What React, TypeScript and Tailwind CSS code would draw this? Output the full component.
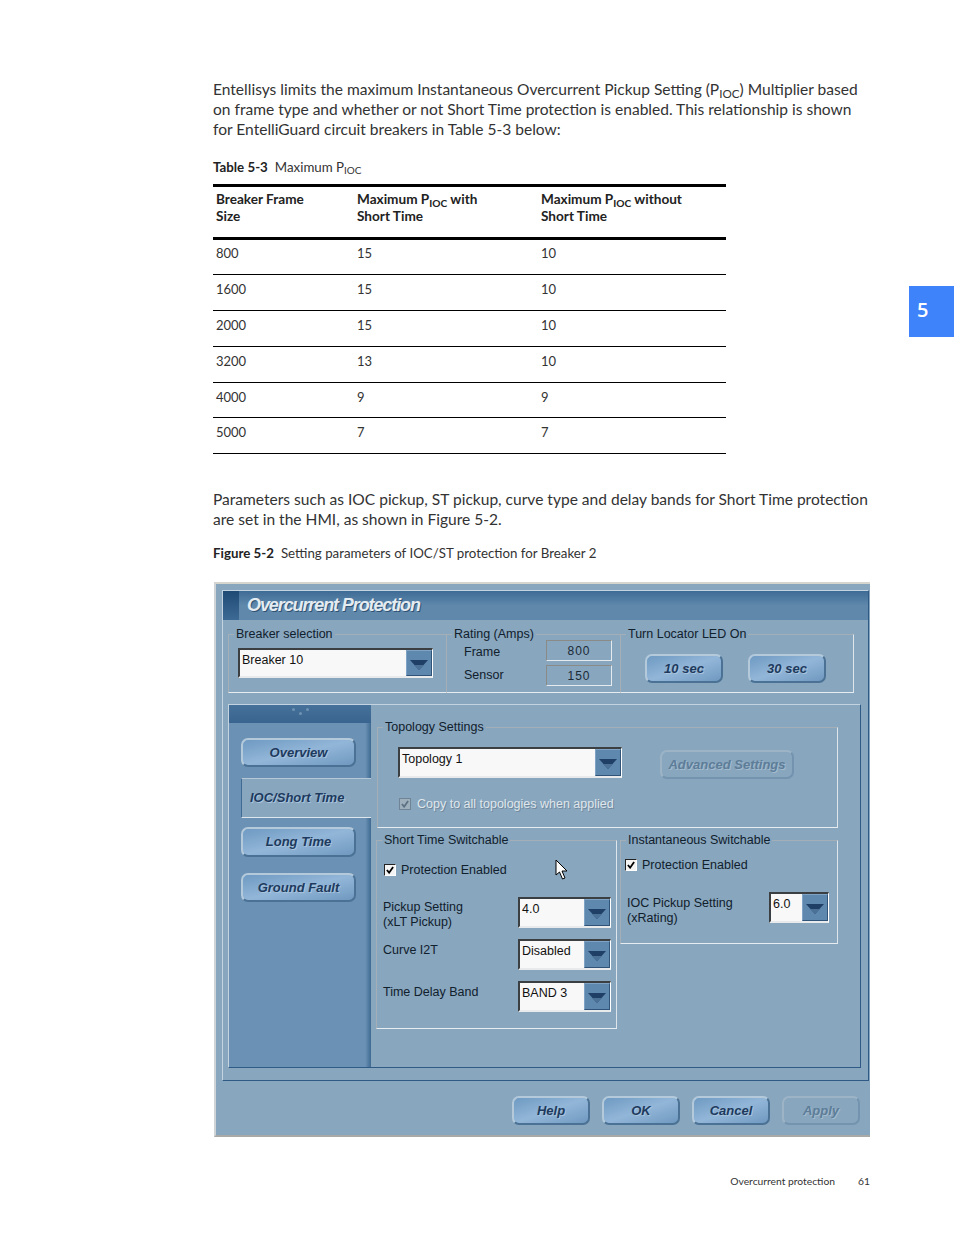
import type { ReactNode } from "react";

const rows = [
  { frame: "800", withSt: "15", without: "10", h: "h-[35px] pt-[3px]" },
  { frame: "1600", withSt: "15", without: "10", h: "h-[36px] pt-[4px]" },
  { frame: "2000", withSt: "15", without: "10", h: "h-[36px] pt-[4px]" },
  { frame: "3200", withSt: "13", without: "10", h: "h-[36px] pt-[4px]" },
  { frame: "4000", withSt: "9", without: "9", h: "h-[35px] pt-[4px]" },
  { frame: "5000", withSt: "7", without: "7", h: "h-[36px] pt-[4px]" },
];

function Group({ title, className, children }: { title: string; className: string; children: ReactNode }) {
  return (
    <fieldset className={`border border-t-[#a3aeb6] border-l-[#a3aeb6] border-r-[#dfe6eb] border-b-[#e6ecf0] ${className}`}>
      <legend className="ml-[5px] px-[2px] h-[14px] text-[12.5px] leading-[14px] text-[#10202c] whitespace-nowrap">{title}</legend>
      {children}
    </fieldset>
  );
}

function Combo({ value, className }: { value: string; className: string }) {
  return (
    <div className={`flex border-t-2 border-l-2 border-r border-b-2 border-t-[#3c3f42] border-l-[#3c3f42] border-r-white border-b-[#e8eaec] ${className}`}>
      <div className="flex-1 bg-[#f8f8f8] pl-[2px] pt-[2px] text-[12.5px] leading-[16px] text-[#111]">{value}</div>
      <div className="w-[26px] flex items-center justify-center bg-[#5f88ae] border-l border-t border-r border-b border-l-[#7ea3c4] border-t-[#7ea3c4] border-r-[#2f5478] border-b-[#2f5478]">
        <svg width="18" height="10" viewBox="0 0 18 10" className="mt-[3px]">
          <polygon points="0,0 18,0 9,10" fill="#1f3f66" />
          <polygon points="4,5 14,5 9,10" fill="#4c7196" />
        </svg>
      </div>
    </div>
  );
}

function SkinButton({ label, className, disabled }: { label: string; className: string; disabled?: boolean }) {
  if (disabled) {
    return (
      <div className={`flex items-center justify-center rounded-[7px] border-2 border-t-[#9db4c7] border-l-[#9db4c7] border-r-[#7393ae] border-b-[#7393ae] bg-[#88a6be] font-bold italic text-[13px] text-[#5d7d99] [text-shadow:1px_1px_0_#a5bccd] ${className}`}>
        {label}
      </div>
    );
  }
  return (
    <div className={`flex items-center justify-center rounded-[7px] border-2 border-t-[#b4cadb] border-l-[#b4cadb] border-r-[#4b7295] border-b-[#4b7295] bg-gradient-to-br from-[#6f9ac2] via-[#92b6d8] to-[#7099c0] font-bold italic text-[13px] text-[#1d3a5e] [text-shadow:1px_1px_0_#a9c4dc] ${className}`}>
      {label}
    </div>
  );
}

function Check({ disabled }: { disabled?: boolean }) {
  return (
    <span className={`flex w-[12px] h-[12px] shrink-0 items-center justify-center border ${disabled ? "border-[#6f8496] bg-[#9fb0bd]" : "border-[#222] border-r-white border-b-white bg-[#f4f4f4]"}`}>
      <svg width="8" height="8" viewBox="0 0 9 9">
        <path d="M1 4.5 L3.5 7.5 L8 1" fill="none" stroke={disabled ? "#5c7184" : "#000"} strokeWidth="2" />
      </svg>
    </span>
  );
}

function ValueBox({ value }: { value: string }) {
  return (
    <div className="w-[66px] h-[21px] flex items-center justify-center border border-t-[#8a8a86] border-l-[#8a8a86] border-r-[#e4eaee] border-b-[#e4eaee] text-[12px] tracking-[1px] text-[#1a2a36]">
      {value}
    </div>
  );
}

function Dialog() {
  return (
    <div className="ml-px w-[656px] h-[555px] bg-[#88a6be] border-t-2 border-l-2 border-b-2 border-t-[#d6d6ce] border-l-[#d0d4d6] border-b-[#a9a9a5] pt-[6px] pl-[6px] font-['Liberation_Sans',sans-serif]">
      <div className="w-[647px] h-[491px] border border-t-[#c3d3df] border-l-[#c3d3df] border-r-[#2f5a85] border-b-[#2f5a85]">
        {/* title bar */}
        <div className="flex h-[29px] bg-gradient-to-b from-[#3e6b95] via-[#5f88ab] to-[#5f88ab]">
          <div className="w-[16px] bg-gradient-to-b from-[#1f4a76] to-[#3d6a95]" />
          <div className="pl-[8px] font-bold italic text-[18px] leading-[29px] tracking-[-1.1px] text-[#e4ecf2] [text-shadow:1px_1px_0_#2f5273]">
            Overcurrent Protection
          </div>
        </div>

        {/* breaker / rating / locator */}
        <div className="flex pl-[5px] mt-[7px] h-[66px]">
          <Group title="Breaker selection" className="w-[219px] h-[66px]">
            <div className="pl-[9px] pt-[7px]">
              <Combo value="Breaker 10" className="w-[195px] h-[30px]" />
            </div>
          </Group>
          <Group title="Rating (Amps)" className="w-[175px] h-[66px] -ml-px">
            <div className="flex h-[51px] pl-[17px]">
              <div className="w-[82px] text-[12.5px] text-[#10202c]">
                <div className="h-[14px] leading-[14px] mt-[4px]">Frame</div>
                <div className="h-[14px] leading-[14px] mt-[9px]">Sensor</div>
              </div>
              <div className="flex flex-col gap-[4px] -mt-[1px]">
                <ValueBox value="800" />
                <ValueBox value="150" />
              </div>
            </div>
          </Group>
          <Group title="Turn Locator LED On" className="w-[234px] h-[66px] -ml-px">
            <div className="flex gap-[25px] pl-[24px] pt-[13px]">
              <SkinButton label="10 sec" className="w-[78px] h-[29px]" />
              <SkinButton label="30 sec" className="w-[78px] h-[29px]" />
            </div>
          </Group>
        </div>

        {/* settings panel */}
        <div className="flex ml-[5px] mt-[11px] w-[633px] h-[364px] border border-t-[#c3d3df] border-l-[#c3d3df] border-r-[#2f5a85] border-b-[#2f5a85]">
          <div className="w-[142px] shrink-0 bg-gradient-to-r from-[#6b91b4] from-[96%] to-[#3f6a92]">
            <div className="flex h-[18px] justify-center gap-[4px] pt-[3px] bg-gradient-to-b from-[#45719a] to-[#38648f]">
              <span className="w-[3px] h-[3px] rounded-full bg-[#7093b3]" />
              <span className="w-[3px] h-[3px] mt-[4px] rounded-full bg-[#7093b3]" />
              <span className="w-[3px] h-[3px] rounded-full bg-[#7093b3]" />
            </div>
            <div className="mt-[15px] ml-[12px]">
              <SkinButton label="Overview" className="w-[115px] h-[29px]" />
            </div>
            <div className="mt-[11px] ml-[12px] h-[40px] flex items-center pl-[8px] bg-[#88a6be] border-l border-t border-b border-l-[#3f6a92] border-t-[#b4c8d8] border-b-[#dfe6eb] font-bold italic text-[13px] text-[#1d3a5e] [text-shadow:1px_1px_0_#a9c4dc]">
              IOC/Short Time
            </div>
            <div className="mt-[9px] ml-[12px]">
              <SkinButton label="Long Time" className="w-[115px] h-[30px]" />
            </div>
            <div className="mt-[16px] ml-[12px]">
              <SkinButton label="Ground Fault" className="w-[115px] h-[29px]" />
            </div>
          </div>

          <div className="flex-1 pt-[15px] pl-[6px]">
            <Group title="Topology Settings" className="w-[461px] h-[108px]">
              <div className="pl-[20px]">
                <div className="flex mt-[13px]">
                  <Combo value="Topology 1" className="w-[224px] h-[31px]" />
                  <SkinButton label="Advanced Settings" disabled className="ml-[38px] mt-[3px] w-[134px] h-[29px]" />
                </div>
                <div className="flex items-center gap-[6px] mt-[18px] ml-[1px] text-[12.5px] leading-[14px] text-[#dfe6ec] [text-shadow:1px_1px_0_#71889c]">
                  <Check disabled />
                  Copy to all topologies when applied
                </div>
              </div>
            </Group>

            <div className="flex gap-[3px] mt-[5px] -ml-px">
              <Group title="Short Time Switchable" className="w-[241px] h-[196px]">
                <div className="pl-[6px]">
                  <div className="relative flex items-center gap-[5px] mt-[17px] ml-px text-[12.5px] leading-[12px] text-[#10202c]">
                    <Check />
                    Protection Enabled
                    <svg width="14" height="21" viewBox="0 0 14 21" className="absolute left-[171px] top-[-5px]">
                      <path d="M1 1 L1 16 L4.5 13 L7.5 20 L10 19 L7 12 L12 12 Z" fill="#fff" stroke="#000" strokeWidth="1" />
                    </svg>
                  </div>
                  <div className="grid grid-cols-[135px_93px] gap-y-[11px] mt-[21px] text-[12.5px] leading-[15px] text-[#10202c]">
                    <div className="h-[31px] pt-[3px]">Pickup Setting<br />(xLT Pickup)</div>
                    <Combo value="4.0" className="h-[31px]" />
                    <div className="h-[31px] pt-[4px]">Curve I2T</div>
                    <Combo value="Disabled" className="h-[31px]" />
                    <div className="h-[31px] pt-[4px]">Time Delay Band</div>
                    <Combo value="BAND 3" className="h-[31px]" />
                  </div>
                </div>
              </Group>
              <Group title="Instantaneous Switchable" className="w-[218px] h-[111px]">
                <div className="pl-[4px]">
                  <div className="flex items-center gap-[5px] mt-[12px] text-[12.5px] leading-[12px] text-[#10202c]">
                    <Check />
                    Protection Enabled
                  </div>
                  <div className="flex mt-[21px] ml-[2px] text-[12.5px] leading-[15px] text-[#10202c]">
                    <div className="w-[142px] h-[31px] pt-[4px]">IOC Pickup Setting<br />(xRating)</div>
                    <Combo value="6.0" className="w-[60px] h-[31px]" />
                  </div>
                </div>
              </Group>
            </div>
          </div>
        </div>
      </div>

      {/* dialog buttons */}
      <div className="flex justify-end gap-[12px] pr-[10px] mt-[15px]">
        <SkinButton label="Help" className="w-[78px] h-[29px]" />
        <SkinButton label="OK" className="w-[78px] h-[29px]" />
        <SkinButton label="Cancel" className="w-[78px] h-[29px]" />
        <SkinButton label="Apply" disabled className="w-[78px] h-[29px]" />
      </div>
    </div>
  );
}

export default function App() {
  return (
    <div className="flex w-[954px] h-[1235px] bg-white overflow-hidden font-['Lato',sans-serif] text-[#333]">
      <div className="ml-[213px] w-[657px] shrink-0 pt-[79px]">
        <p className="text-[15.55px] leading-[20px] whitespace-nowrap">
          Entellisys limits the maximum Instantaneous Overcurrent Pickup Setting (P<sub>IOC</sub>) Multiplier based<br />
          on frame type and whether or not Short Time protection is enabled. This relationship is shown<br />
          for EntelliGuard circuit breakers in Table 5-3 below:
        </p>

        <p className="mt-[18px] text-[13.3px] leading-[20px]">
          <span className="font-bold text-[#222]">Table 5-3</span>
          <span className="ml-[7px]">Maximum P<sub>IOC</sub></span>
        </p>

        <div className="mt-[7px] w-[513px] text-[13px]">
          <div className="grid grid-cols-[141px_184px_188px] h-[56px] pl-[3px] pt-[4px] border-t-[3px] border-b-[3px] border-black font-bold text-[13.6px] leading-[17px] text-[#222]">
            <div>Breaker Frame<br />Size</div>
            <div>Maximum P<sub>IOC</sub> with<br />Short Time</div>
            <div>Maximum P<sub>IOC</sub> without<br />Short Time</div>
          </div>
          {rows.map((r) => (
            <div key={r.frame} className={`grid grid-cols-[141px_184px_188px] pl-[3px] leading-[20px] border-b border-black ${r.h}`}>
              <div>{r.frame}</div>
              <div>{r.withSt}</div>
              <div>{r.without}</div>
            </div>
          ))}
        </div>

        <p className="mt-[35px] text-[15.55px] leading-[20px] whitespace-nowrap">
          Parameters such as IOC pickup, ST pickup, curve type and delay bands for Short Time protection<br />
          are set in the HMI, as shown in Figure 5-2.
        </p>

        <p className="mt-[14px] text-[13.3px] leading-[20px]">
          <span className="font-bold text-[#222]">Figure 5-2</span>
          <span className="ml-[7px]">Setting parameters of IOC/ST protection for Breaker 2</span>
        </p>

        <div className="mt-[19px]">
          <Dialog />
        </div>

        <div className="flex justify-end mt-[37px] text-[10.3px] leading-[14px]">
          <span>Overcurrent protection</span>
          <span className="ml-[23px]">61</span>
        </div>
      </div>

      <div className="ml-[39px] mt-[286px] w-[45px] h-[51px] shrink-0 bg-[#3f83fb] pl-[8px] font-['Open_Sans',sans-serif] font-semibold text-[20px] leading-[48px] text-white">
        5
      </div>
    </div>
  );
}
